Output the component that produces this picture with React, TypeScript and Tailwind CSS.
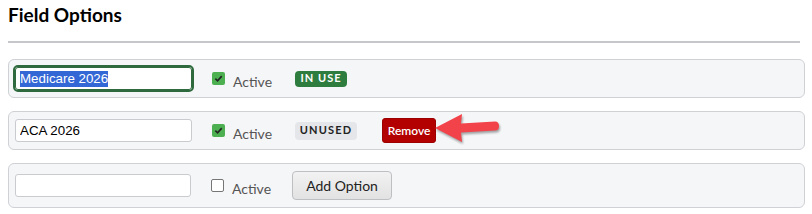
import React from 'react';

function Checkbox({ checked }: { checked: boolean }) {
  return checked ? (
    <span className="w-[13px] h-[13px] rounded-[2px] bg-[#4caf50] flex items-center justify-center">
      <svg width="9" height="9" viewBox="0 0 10 10">
        <path d="M1.5 5.2 L4 7.6 L8.6 2.4" fill="none" stroke="#222" strokeWidth="1.8" />
      </svg>
    </span>
  ) : (
    <span className="w-[13px] h-[13px] rounded-[2px] border border-[#767676] bg-white" />
  );
}

function ActiveLabel({ checked }: { checked: boolean }) {
  return (
    <label className="ml-5 flex items-center gap-2">
      <Checkbox checked={checked} />
      <span className="text-[14px] text-[#555] mt-[5px]">Active</span>
    </label>
  );
}

export default function App() {
  return (
    <div className="relative w-[812px] h-[214px] bg-white px-2 pt-[3px] font-['Lato',sans-serif] text-[#111]">
      <h2 className="text-[19px] font-bold leading-[24px] text-black">Field Options</h2>
      <div className="mt-[14px] w-[792px] h-[2px] bg-[#c6c7cb]" />

      <div className="mt-[16px] flex flex-col gap-[13px] w-[797px]">
        <div className="h-[39px] flex items-center px-[6px] border border-[#cfd1d5] rounded-[6px] bg-[#f5f6f8]">
          <div className="w-[177px] h-[23px] flex items-center px-[4px] bg-white border border-[#2e6a3d] rounded-[3px] outline-2 outline-[#2e6a3d] font-['Liberation_Sans',sans-serif] text-[13.33px]">
            <span className="bg-[#3367d6] text-white leading-[16px]">Medicare 2026</span>
          </div>
          <ActiveLabel checked />
          <span className="ml-[23px] h-[16px] w-[52px] justify-center flex items-center rounded-[4px] bg-[#2e7d3e] text-white text-[11px] font-bold tracking-[1px]">
            IN USE
          </span>
        </div>

        <div className="h-[39px] flex items-center px-[6px] border border-[#cfd1d5] rounded-[6px] bg-[#f5f6f8]">
          <input
            readOnly
            value="ACA 2026"
            className="w-[177px] h-[23px] px-[4px] bg-white border border-[#c9cbcf] rounded-[3px] font-['Liberation_Sans',sans-serif] text-[13.33px] text-black"
          />
          <ActiveLabel checked />
          <span className="ml-[23px] h-[18px] w-[62px] justify-center flex items-center rounded-[4px] bg-[#e4e6ea] text-[#222] text-[11px] font-bold tracking-[1.2px]">
            UNUSED
          </span>
          <button className="ml-[25px] w-[54px] h-[25px] rounded-[3px] bg-[#b30000] border border-[#9c0000] text-white text-[12px] font-semibold">
            Remove
          </button>
        </div>

        <div className="h-[45px] flex items-center px-[6px] border border-[#cfd1d5] rounded-[6px] bg-[#f5f6f8]">
          <input
            readOnly
            value=""
            className="w-[176px] h-[23px] px-[4px] bg-white border border-[#c9cbcf] rounded-[3px] font-['Liberation_Sans',sans-serif] text-[13.33px]"
          />
          <ActiveLabel checked={false} />
          <button className="ml-[21px] w-[100px] h-[29px] rounded-[4px] border border-[#bdbfc3] bg-gradient-to-b from-[#f2f2f2] to-[#e2e2e2] text-[14px] text-[#222]">
            Add Option
          </button>
        </div>
      </div>

      <svg
        className="absolute left-[433px] top-[111px] drop-shadow-[1px_2px_1px_rgba(0,0,0,0.35)]"
        width="70"
        height="34"
        viewBox="0 0 70 34"
      >
        <path
          d="M2 17 L29 3 L28 12.5 L62 10.5 Q66 10.5 66 15 Q66 19.5 62 19.5 L28 21.5 L29 31 Z"
          fill="#f2434b"
        />
      </svg>
    </div>
  );
}
